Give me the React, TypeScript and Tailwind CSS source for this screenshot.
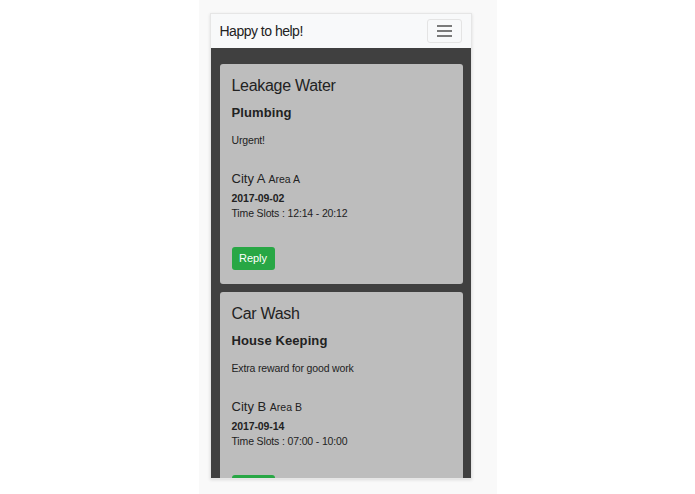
import React from 'react'

// Mobile preview of a "Happy to help!" job board
// Panel 298px wide, centered; phone frame 262x466 inside

interface Job {
  title: string
  category: string
  note: string
  city: string
  area: string
  date: string
  slot: string
}

const jobs: Job[] = [
  {
    title: 'Leakage Water',
    category: 'Plumbing',
    note: 'Urgent!',
    city: 'City A',
    area: 'Area A',
    date: '2017-09-02',
    slot: '12:14 - 20:12',
  },
  {
    title: 'Car Wash',
    category: 'House Keeping',
    note: 'Extra reward for good work',
    city: 'City B',
    area: 'Area B',
    date: '2017-09-14',
    slot: '07:00 - 10:00',
  },
]

function JobCard({ job }: { job: Job }) {
  return (
    <div className="shrink-0 rounded-[3px] bg-[#bdbdbd] px-3 pt-3 pb-[14px] text-[#222]">
      <h4 className="text-[16px] leading-[20px] tracking-[-0.3px]">{job.title}</h4>
      <h5 className="mt-2 text-[13px] font-bold leading-[17px] tracking-[0.1px]">{job.category}</h5>
      <p className="mt-3 text-[10.5px] leading-[14px] tracking-[-0.15px]">{job.note}</p>
      <div className="mt-6 text-[13px] leading-[16px]">
        {job.city} <span className="text-[10.5px]">{job.area}</span>
      </div>
      <div className="mt-1 text-[10.5px] font-bold leading-[14px] tracking-[-0.1px]">{job.date}</div>
      <div className="mt-px text-[10.5px] leading-[14px] tracking-[-0.15px]">Time Slots : {job.slot}</div>
      <button className="mt-[27px] flex h-[23px] w-[43px] items-center justify-center rounded-[3px] bg-[#28a745] text-[11px] text-white">
        Reply
      </button>
    </div>
  )
}

export default function App() {
  return (
    <div
      className="flex min-h-screen w-full justify-center bg-white"
      style={{ fontFamily: '"Liberation Sans", Arial, sans-serif' }}
    >
      <div className="h-[494px] w-[298px] bg-[#f9f9f9] pl-[11px] pt-[13px]">
        <div className="flex h-[466px] w-[262px] flex-col overflow-hidden border border-[#e6e6e6] shadow-[0_1px_3px_rgba(0,0,0,0.12)]">
          {/* navbar */}
          <div className="flex h-[34px] shrink-0 items-center justify-between bg-[#f8f9fa] pl-[9px] pr-[9px]">
            <span className="text-[14px] tracking-[-0.5px] text-[#222]">Happy to help!</span>
            <button className="flex h-[24px] w-[35px] flex-col items-center justify-center gap-[3.5px] rounded-[3px] border border-[#e4e4e4]">
              <span className="block h-[1.5px] w-[15px] bg-[#7a7a7a]" />
              <span className="block h-[1.5px] w-[15px] bg-[#7a7a7a]" />
              <span className="block h-[1.5px] w-[15px] bg-[#7a7a7a]" />
            </button>
          </div>
          {/* job list */}
          <div className="flex flex-1 flex-col gap-2 bg-[#404040] pl-[9px] pr-[8px] pt-4">
            {jobs.map((job, i) => (
              <JobCard key={i} job={job} />
            ))}
          </div>
        </div>
      </div>
    </div>
  )
}
